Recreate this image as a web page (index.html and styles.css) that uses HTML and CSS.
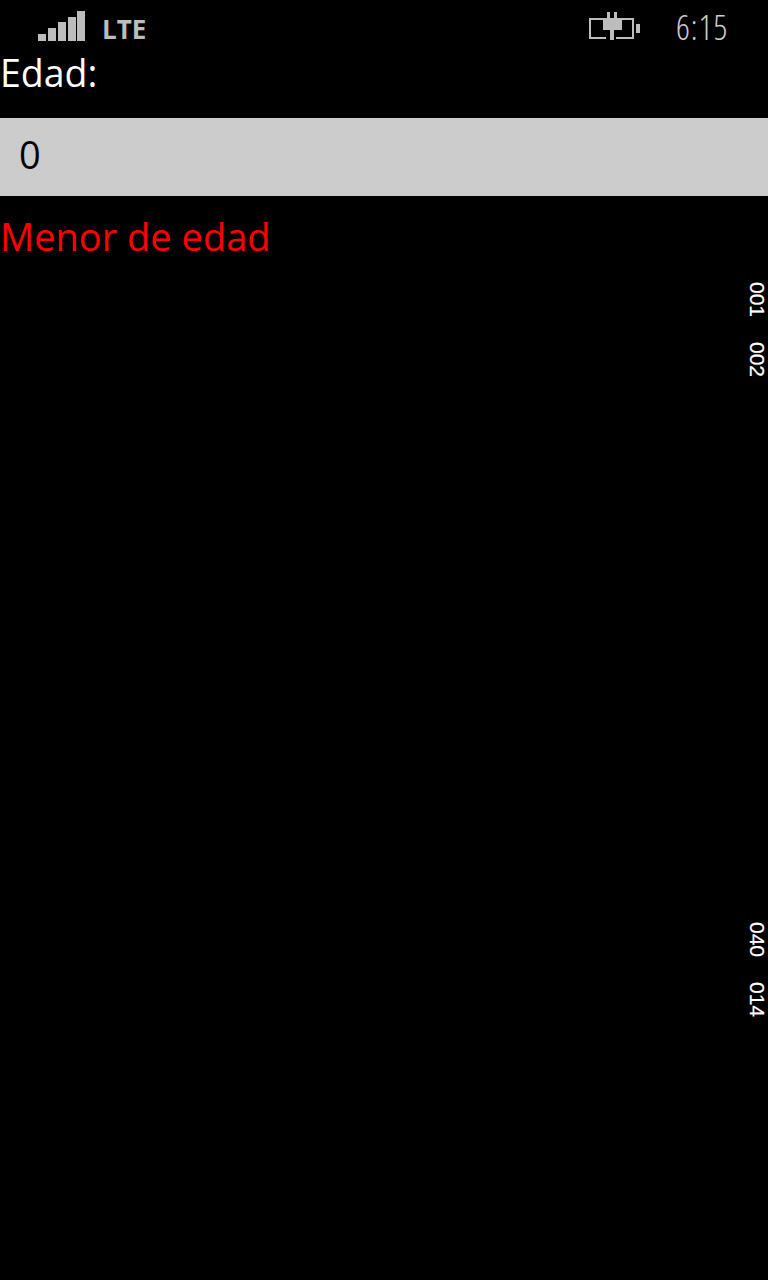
FILE: index.html
```html
<!DOCTYPE html>
<html lang="es">
<head>
  <meta charset="UTF-8">
  <meta name="viewport" content="width=device-width, initial-scale=1">
  <title>Edad</title>
  <link rel="stylesheet" href="styles.css">
</head>
<body>
  <header class="status-bar">
    <div class="signal">
      <svg class="signal-icon" width="48" height="31" viewBox="0 0 48 31" fill="#bdbdbd">
        <rect x="0" y="23" width="8" height="7"/>
        <rect x="10" y="17" width="8" height="13"/>
        <rect x="20" y="11" width="8" height="19"/>
        <rect x="30" y="6" width="8" height="24"/>
        <rect x="39" y="0" width="8" height="30"/>
      </svg>
      <span class="network">LTE</span>
    </div>
    <div class="status-right">
      <svg class="battery-icon" width="52" height="28" viewBox="0 0 52 28" fill="none">
        <path d="M14 7H1V26H17M27 26H44V7H33" stroke="#bdbdbd" stroke-width="2"/>
        <rect x="14" y="6" width="19" height="12" fill="#bdbdbd"/>
        <rect x="18" y="0" width="3" height="6" fill="#bdbdbd"/>
        <rect x="25" y="0" width="3" height="6" fill="#bdbdbd"/>
        <rect x="21" y="18" width="4" height="10" fill="#bdbdbd"/>
        <rect x="47" y="12" width="4" height="9" fill="#bdbdbd"/>
      </svg>
      <span class="clock">6:15</span>
    </div>
  </header>

  <main>
    <label class="field-label" for="edad">Edad:</label>
    <div class="input-band">
      <input id="edad" class="age-input" type="text" value="0">
    </div>
    <p class="result">Menor de edad</p>
  </main>

  <div class="counter counter-1">001</div>
  <div class="counter counter-2">002</div>
  <div class="counter counter-3">040</div>
  <div class="counter counter-4">014</div>
</body>
</html>
```

FILE: styles.css
```css
* {
  margin: 0;
  padding: 0;
  box-sizing: border-box;
}

html,
body {
  height: 1280px;
  overflow: hidden;
}

body {
  position: relative;
  background-color: #000;
  color: #fff;
  font-family: "Open Sans", "Noto Sans", sans-serif;
}

.status-bar {
  display: flex;
  justify-content: space-between;
  height: 53px;
  padding: 11px 40px 0 38px;
  color: #bdbdbd;
}

.signal {
  display: flex;
  align-items: flex-start;
}

.network {
  margin-left: 16px;
  margin-top: 1px;
  font-size: 26px;
  font-weight: 700;
  line-height: 34px;
}

.status-right {
  display: flex;
  align-items: flex-start;
}

.battery-icon {
  margin-top: 1px;
}

.clock {
  margin-left: 35px;
  width: 52px;
  font-size: 34px;
  font-weight: 300;
  font-stretch: 75%;
  letter-spacing: 1px;
  line-height: 32px;
  white-space: nowrap;
  color: #ccc;
}

.field-label {
  display: block;
  height: 65px;
  font-size: 37.5px;
  line-height: 40px;
}

.input-band {
  height: 78px;
  padding-left: 19px;
  background-color: #ccc;
}

.age-input {
  display: block;
  width: 100%;
  height: 72px;
  background: transparent;
  border: none;
  outline: none;
  color: #050505;
  font-family: inherit;
  font-size: 38px;
}

.result {
  margin-top: 19px;
  color: #f00;
  font-size: 38px;
  line-height: 42px;
}

.counter {
  position: absolute;
  left: 749px;
  width: 17px;
  writing-mode: vertical-rl;
  font-family: "Liberation Sans", sans-serif;
  font-size: 21px;
  line-height: 17px;
  -webkit-text-stroke: 0.2px #fff;
}

.counter-1 {
  top: 282px;
}

.counter-2 {
  top: 342px;
}

.counter-3 {
  top: 922px;
}

.counter-4 {
  top: 982px;
}
```
